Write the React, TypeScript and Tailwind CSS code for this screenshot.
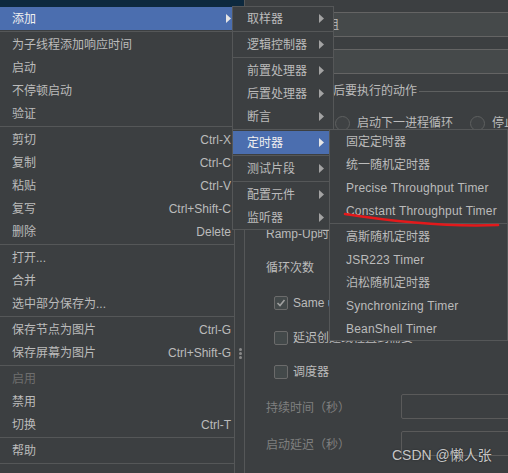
import type { ReactNode } from "react";

type MenuEntry =
  | { sep: true }
  | {
      sep?: false;
      label: string;
      shortcut?: string;
      arrow?: boolean;
      active?: boolean;
      disabled?: boolean;
      latin?: boolean;
    };

const mainMenu: MenuEntry[] = [
  { label: "添加", arrow: true, active: true },
  { sep: true },
  { label: "为子线程添加响应时间" },
  { label: "启动" },
  { label: "不停顿启动" },
  { label: "验证" },
  { sep: true },
  { label: "剪切", shortcut: "Ctrl-X" },
  { label: "复制", shortcut: "Ctrl-C" },
  { label: "粘贴", shortcut: "Ctrl-V" },
  { label: "复写", shortcut: "Ctrl+Shift-C" },
  { label: "删除", shortcut: "Delete" },
  { sep: true },
  { label: "打开..." },
  { label: "合并" },
  { label: "选中部分保存为..." },
  { sep: true },
  { label: "保存节点为图片", shortcut: "Ctrl-G" },
  { label: "保存屏幕为图片", shortcut: "Ctrl+Shift-G" },
  { sep: true },
  { label: "启用", disabled: true },
  { label: "禁用" },
  { label: "切换", shortcut: "Ctrl-T" },
  { sep: true },
  { label: "帮助" },
  { sep: true },
];

const addMenu: MenuEntry[] = [
  { label: "取样器", arrow: true },
  { sep: true },
  { label: "逻辑控制器", arrow: true },
  { sep: true },
  { label: "前置处理器", arrow: true },
  { label: "后置处理器", arrow: true },
  { label: "断言", arrow: true },
  { sep: true },
  { label: "定时器", arrow: true, active: true },
  { sep: true },
  { label: "测试片段", arrow: true },
  { sep: true },
  { label: "配置元件", arrow: true },
  { label: "监听器", arrow: true },
];

const timerMenu: MenuEntry[] = [
  { label: "固定定时器" },
  { label: "统一随机定时器" },
  { label: "Precise Throughput Timer", latin: true },
  { label: "Constant Throughput Timer", latin: true },
  { sep: true },
  { label: "高斯随机定时器" },
  { label: "JSR223 Timer", latin: true },
  { label: "泊松随机定时器" },
  { label: "Synchronizing Timer", latin: true },
  { label: "BeanShell Timer", latin: true },
];

function Arrow({ light }: { light?: boolean }) {
  return (
    <svg width="5" height="9" viewBox="0 0 5 9" className="shrink-0">
      <path d="M0 0 L5 4.5 L0 9 Z" fill={light ? "#e6e6e6" : "#a3a3a3"} />
    </svg>
  );
}

function MenuRows({ items, padL, padR }: { items: MenuEntry[]; padL: string; padR: string }) {
  return (
    <>
      {items.map((it, i) =>
        it.sep ? (
          <div key={i} className="h-[3px] flex items-center">
            <div className="h-px w-full bg-[#555758]" />
          </div>
        ) : (
          <div
            key={i}
            className={`h-[23px] flex items-center justify-between whitespace-nowrap ${padL} ${padR} ${
              it.active ? "bg-[#4b6eaf] text-[#f0f0f0]" : it.disabled ? "text-[#6e6e6e]" : "text-[#bbbbbb]"
            }`}
          >
            <span className={it.latin ? "tracking-[0.2px]" : ""}>{it.label}</span>
            {it.shortcut && <span>{it.shortcut}</span>}
            {it.arrow && <Arrow light={it.active} />}
          </div>
        )
      )}
    </>
  );
}

function Checkbox({ checked }: { checked?: boolean }) {
  return (
    <div className="w-[14px] h-[14px] rounded-[2px] border border-[#6b6b6b] bg-[#43494a] flex items-center justify-center">
      {checked && (
        <svg width="10" height="10" viewBox="0 0 10 10">
          <path d="M1.5 5 L4 7.5 L8.5 2" stroke="#a0a0a0" strokeWidth="1.6" fill="none" />
        </svg>
      )}
    </div>
  );
}

function Radio({ children }: { children: ReactNode }) {
  return (
    <div className="flex items-center gap-[7px] shrink-0">
      <div className="w-[15px] h-[15px] rounded-full border border-[#5e6060] bg-[#3f4244]" />
      <span className="whitespace-nowrap">{children}</span>
    </div>
  );
}

export default function App() {
  return (
    <div className="relative w-[508px] h-[473px] overflow-hidden bg-[#3c3f41] flex text-[12px] leading-none text-[#bbbbbb] font-['Liberation_Sans','Noto_Sans_CJK_SC',sans-serif]">
      {/* tree panel */}
      <div className="w-[245px] shrink-0 border-r border-[#555758] flex flex-col">
        <div className="h-[7px] bg-[#0d293e]" />
      </div>

      {/* thread group form */}
      <div className="flex-1 min-w-0 flex flex-col pl-[21px]">
        <div className="mt-[12px] h-[25px] flex items-center">
          <span className="w-[34px] shrink-0">名称：</span>
          <div className="flex-1 -mr-[10px] h-[25px] border border-[#646464] bg-[#45494a] px-[2px] flex items-center">
            线程组
          </div>
        </div>
        <div className="mt-[12px] h-[25px] flex items-center">
          <span className="w-[34px] shrink-0">注释：</span>
          <div className="flex-1 -mr-[10px] h-[25px] border border-[#646464] bg-[#45494a]" />
        </div>

        <div className="mt-[9px] -ml-[10px] h-[16px] flex items-center">
          <div className="w-[3px] h-px bg-[#5e6060]" />
          <span className="ml-[2px] whitespace-nowrap">在取样器错误后要执行的动作</span>
          <div className="flex-1 ml-[2px] h-px bg-[#5e6060]" />
        </div>
        <div className="mt-[16px] h-[16px] flex items-center gap-[17px] pl-[6px] overflow-hidden">
          <Radio>继续</Radio>
          <Radio>启动下一进程循环</Radio>
          <Radio>停止线程</Radio>
        </div>

        <div className="mt-[19px] -ml-[10px] h-[16px] flex items-center">
          <div className="w-[3px] h-px bg-[#5e6060]" />
          <span className="ml-[2px]">线程属性</span>
          <div className="flex-1 ml-[2px] h-px bg-[#5e6060]" />
        </div>
        <div className="mt-[18px] h-[25px] flex items-center">线程数：</div>
        <div className="mt-[12px] h-[25px] flex items-center whitespace-nowrap">Ramp-Up时间（秒）：</div>
        <div className="mt-[9px] h-[25px] flex items-center">循环次数</div>

        <div className="mt-[15px] h-[16px] flex items-center gap-[5px] pl-[8px] whitespace-nowrap">
          <Checkbox checked />
          <span>Same user on each iteration</span>
        </div>
        <div className="mt-[19px] h-[16px] flex items-center gap-[5px] pl-[8px] whitespace-nowrap">
          <Checkbox />
          <span>延迟创建线程直到需要</span>
        </div>
        <div className="mt-[18px] h-[16px] flex items-center gap-[5px] pl-[8px] whitespace-nowrap">
          <Checkbox />
          <span>调度器</span>
        </div>

        <div className="mt-[14px] h-[25px] flex items-center text-[#7f7f7f]">
          <span className="w-[135px] shrink-0 pt-[2px]">持续时间（秒）</span>
          <div className="flex-1 -mr-[10px] h-[25px] rounded-[2px] border border-[#5a5a5a]" />
        </div>
        <div className="mt-[12px] h-[25px] flex items-center text-[#7f7f7f]">
          <span className="w-[135px] shrink-0 pt-[2px]">启动延迟（秒）</span>
          <div className="flex-1 -mr-[10px] h-[25px] rounded-[2px] border border-[#5a5a5a]" />
        </div>
      </div>

      {/* splitter grip */}
      <div className="absolute left-[239px] top-[348px] flex flex-col gap-[1px]">
        <div className="w-[3px] h-[3px] rounded-full bg-[#8a8a8a]" />
        <div className="w-[3px] h-[3px] rounded-full bg-[#8a8a8a]" />
        <div className="w-[3px] h-[3px] rounded-full bg-[#8a8a8a]" />
      </div>

      {/* popup: main */}
      <div className="absolute left-0 top-[7px] bottom-0 w-[235px] bg-[#3c3f41] border-r border-[#555758]">
        <MenuRows items={mainMenu} padL="pl-[12px]" padR="pr-[3px]" />
      </div>

      {/* popup: 添加 */}
      <div className="absolute left-[232px] top-[6px] w-[102px] bg-[#3c3f41] border border-[#555758]">
        <MenuRows items={addMenu} padL="pl-[14px]" padR="pr-[9px]" />
      </div>

      {/* popup: 定时器 */}
      <div className="absolute left-[329px] top-[129px] w-[179px] bg-[#3c3f41] border border-[#555758]">
        <MenuRows items={timerMenu} padL="pl-[16px]" padR="pr-[4px]" />
      </div>

      {/* red hand-drawn underline */}
      <svg className="absolute left-[340px] top-[207px]" width="166" height="24" viewBox="0 0 166 24">
        <path d="M5 7 C 50 14, 110 20, 158 18" stroke="#e3191b" strokeWidth="2.6" fill="none" strokeLinecap="round" />
      </svg>

      {/* watermark */}
      <div className="absolute left-[392px] top-[446px] text-[14px] leading-[18px] text-[#d9d9d9]/90 whitespace-nowrap [text-shadow:0_0_2px_rgba(0,0,0,0.4)]">
        CSDN @懒人张
      </div>
    </div>
  );
}
